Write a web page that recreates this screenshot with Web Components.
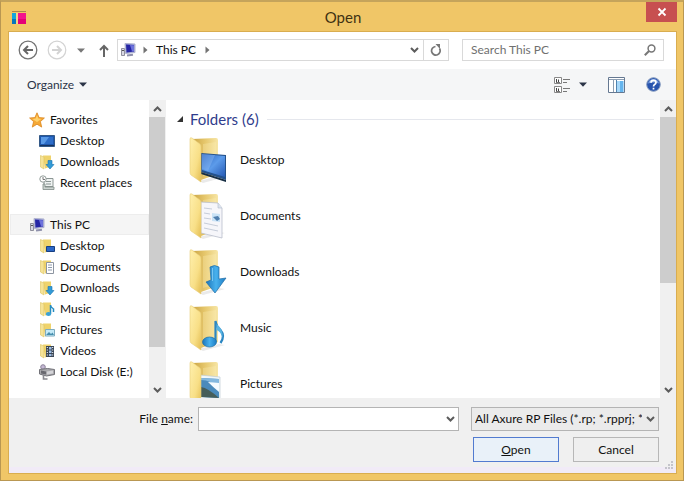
<!DOCTYPE html>
<html lang="en">
<head>
<meta charset="utf-8">
<title>Open</title>
<style>
html, body { height: 100%; margin: 0; }
body { box-sizing: border-box; padding: 0 1px 1px 0; background: #fff; font: 12px/16px Lato, "Open Sans", sans-serif; color: #111; overflow: hidden; }
</style>
</head>
<body>
<open-dialog></open-dialog>
<script>
const folderSmall = `<path d="M4 1.500h8v11l-6 2z" fill="#efd36c"/><path d="M1.500 1.500L5 3v12l-3.500-2z" fill="#f6e397" stroke="#dcc260" stroke-width=".6"/>`;
const folderBig = `<defs><linearGradient id="b" x1="0" x2="1"><stop offset="0" stop-color="#c9a343"/><stop offset=".5" stop-color="#e6c76c"/><stop offset="1" stop-color="#f7e6a6"/></linearGradient><linearGradient id="f" x1="0" x2="1" y2="1"><stop offset="0" stop-color="#fff0ad"/><stop offset=".6" stop-color="#f8df87"/><stop offset="1" stop-color="#e3bd52"/></linearGradient><linearGradient id="u" x1="0" x2="1" y2="1"><stop offset="0" stop-color="#2a62bd"/><stop offset=".5" stop-color="#5c9bea"/><stop offset="1" stop-color="#2559b4"/></linearGradient><linearGradient id="c" x1="0" x2="1"><stop offset="0" stop-color="#1b75ba"/><stop offset=".5" stop-color="#48b1ed"/><stop offset="1" stop-color="#1c7cc4"/></linearGradient></defs>
<path d="M10 45l20-5 6 1-22 6z" fill="#888" opacity=".18"/><path d="M3 3l24-1q2 0 2 2v34l-17 6z" fill="url(#b)"/><path d="M14 8l13-2v30l-13 4z" fill="#fff2b8" opacity=".3"/>`;
const flap = `<path d="M1 3q0-2 2-1l8 6q1 1 1 3v35L2 39q-1-1-1-3z" fill="url(#f)" stroke="#e8cd78" stroke-width=".6"/>`;
const pcIcon = `<path d="M1.500 6.500h3v7h-3z" fill="#d8d8e2" stroke="#777788" stroke-width=".8"/><path d="M2 8.500h2" stroke="#555"/><path d="M5 1.500l10 .5v8.500l-9.500 1z" fill="#9ba1d4" stroke="#b0b3cf"/><path d="M6 2.500l8 .5v6.500l-7.500 1z" fill="#2525a5"/><path d="M10 3l4 .2v6l-2 .2z" fill="#6d72dc"/><path d="M7 13.500l6-.8" stroke="#8f91ac" stroke-width="2"/>`;
const arrowSmall = `<path d="M9 6.500h4v4h2l-4 4.500-4-4.500h2z" fill="#329bd8" stroke="#1774ae" stroke-width=".6"/>`;
const ICONS = {
  app: [16,16,`<path d="M1 2.500h14" stroke="#a98751"/><path d="M1 4h4v11H1z" fill="#15a6dc"/><path d="M1 10h4v5H1z" fill="#0675bd"/><path d="M7 4h8v11H7z" fill="#f4148d"/><path d="M7 10h8v5H7z" fill="#e50078"/><path d="M6 4v11" stroke="#f8dfae"/>`],
  close: [10,10,`<path d="M1.500 1.500l7 7m0-7l-7 7" stroke="#fff" stroke-width="1.800"/>`],
  back: [20,20,`<circle cx="10" cy="10" r="8.800" fill="#fff" stroke="#737373" stroke-width="1.300"/><path d="M15 10H6m4-4l-4 4 4 4" fill="none" stroke="#666" stroke-width="2"/>`],
  forward: [20,20,`<circle cx="10" cy="10" r="8.800" fill="#fff" stroke="#d3d3d3" stroke-width="1.200"/><path d="M5 10h9m-4-4l4 4-4 4" fill="none" stroke="#d3d3d3" stroke-width="2"/>`],
  down: [8,5,`<path d="M0 .5h8L4 4.800z" fill="currentColor"/>`],
  right: [5,8,`<path d="M.5.500l4 3.500-4 3.500z" fill="#737373"/>`],
  up: [10,13,`<path d="M5 13V2M1 6l4-4 4 4" fill="none" stroke="#666" stroke-width="2"/>`],
  chevron: [9,6,`<path d="M1 1l3.500 3.500L8 1" fill="none" stroke="#5c5c5c" stroke-width="2"/>`],
  chevronUp: [9,6,`<path d="M1 5l3.500-3.500L8 5" fill="none" stroke="#5c5c5c" stroke-width="2"/>`],
  refresh: [12,12,`<path d="M9.500 4.500A4.300 4.300 0 1 1 5.500 2.500" fill="none" stroke="#777" stroke-width="1.700"/><path d="M5.500 0h4.500v5z" fill="#777"/>`],
  search: [12,12,`<circle cx="7.500" cy="4.500" r="3.400" fill="none" stroke="#777" stroke-width="1.500"/><path d="M5 7L.8 11.200" stroke="#777" stroke-width="2"/>`],
  views: [17,16,`<g fill="#fff" stroke="#888"><path d="M.5.500h7v6h-7zM.5 9.500h7v6h-7z"/></g><path d="M2.500 2v3m2-2.500v2.500M2.500 11v3m2-2.500v2.500" stroke="#444"/><path d="M2 5.500h4M2 14.500h4M9 2.500h7M9 5.500h4M9 11.500h7M9 14.500h4" stroke="#777"/>`],
  pane: [17,16,`<path d="M.5.500h16v15H.5z" fill="#fff" stroke="#657891"/><path d="M1 2.500h15M5.500 3v12" stroke="#8d9eb2"/><path d="M9 4h6.500v11H9z" fill="#65b5ee"/><path d="M9 4h3v11H9z" fill="#a6d8fa"/><path d="M8.500 3v12" stroke="#5284af"/>`],
  help: [15,15,`<circle cx="7.500" cy="7.500" r="6.800" fill="#2854ae" stroke="#8298bd"/><path d="M2 6.500a5.600 5.600 0 0 1 11 0q-5-2-11 0z" fill="#7c9fdd"/><path d="M5 5.700q0-2.400 2.500-2.400T10 5.500q0 1.200-1.400 2Q7.500 8.200 7.500 9.500m0 1.200v1.700" fill="none" stroke="#fff" stroke-width="1.700"/>`],
  star: [16,16,`<path d="M8 .8l2.100 4.800 5.300.4-4 3.600 1.300 5.500L8 12.200l-4.700 2.900 1.300-5.500-4-3.600 5.300-.4z" fill="#f5a936" stroke="#dc861f" stroke-width=".8"/><path d="M8 3l1.300 3.500 3 .4-4.300 3-4.600-3 3.300-.4z" fill="#ffd16c"/>`],
  screen: [16,16,`<path d="M.5 2.500h15v11H.5z" fill="#1e57ad" stroke="#345987"/><path d="M2 4h12v7H2z" fill="#2e6ec9"/><path d="M2 4h8l-5 7H2z" fill="#5a9ae6"/><path d="M1 12.500h14" stroke="#17345f"/>`],
  pc: [16,16,pcIcon],
  recent: [16,16,`<path d="M5 3.500h9v8H5z" fill="#eff3f2" stroke="#8c9694"/><path d="M7 6.500h5M7 9h5" stroke="#8b9694"/><circle cx="4" cy="4" r="3.200" fill="#fff" stroke="#929c99"/><path d="M4 2v2.500h2" fill="none" stroke="#777"/><path d="M4 9v5.500h11v-2.500H6V9z" fill="#ccd4d1" stroke="#7f8a87" stroke-width=".8"/>`],
  sDesktop: [16,16,folderSmall+`<path d="M7.500 8.500h8v5h-8z" fill="#2b66c5" stroke="#163f82"/>`],
  sDocuments: [16,16,folderSmall+`<path d="M7.500 3.500h7v11h-7z" fill="#fff" stroke="#8d95a1"/><path d="M9 6h4M9 8.500h4M9 11h4" stroke="#8f9bae"/>`],
  sDownloads: [16,16,folderSmall+arrowSmall],
  sMusic: [16,16,folderSmall+`<path d="M11.500 13V4q0 2 3 4v3" fill="none" stroke="#268cc0" stroke-width="1.500"/><ellipse cx="9.500" cy="13" rx="2.700" ry="2" fill="#3aa1d5"/>`],
  sPictures: [16,16,folderSmall+`<path d="M6.500 7.500h9v6.500h-9z" fill="#c4e9f7" stroke="#7eacc0"/><path d="M7 13l3-3 2 2 1.500-1.500L15 13z" fill="#478fae"/>`],
  sVideos: [16,16,folderSmall+`<path d="M7 3h8v11H7z" fill="#3a4656"/><path d="M10 4h2.500v2.500H10zM10 7.500h2.500V10H10zM10 11h2.500v2H10z" fill="#9cbde5"/><path d="M8.300 4v10m5.400-10v10" stroke="#fff" stroke-dasharray="1 1.500"/>`],
  disk: [16,16,`<circle cx="4" cy="3" r="2.300" fill="#c4b8d4" stroke="#8b8298"/><path d="M.5 5.500l8-1 7 1v5l-8 1.500-7-2z" fill="#a9a9ad" stroke="#727278"/><path d="M2 6.500l5 1v3l-5-1z" fill="#696970"/><path d="M8 7.500l6-1v3l-6 1z" fill="#d4d4d8"/><path d="M4.500 11v4h4" fill="none" stroke="#898990" stroke-width="1.600"/>`],
  bDesktop: [40,48,folderBig+`<path d="M12 17l25 2v25l-25-8z" fill="#24518a"/><path d="M13 18l23 2v21l-23-7z" fill="url(#u)"/><path d="M13 18l13 1-7 16-6-2z" fill="#a8d2ff" opacity=".3"/><path d="M12 36l25 8v2l-25-8z" fill="#172e44"/>`+flap],
  bDocuments: [40,48,folderBig+`<path d="M12 10l17 1 4 5v30l-21-5z" fill="#f6f6fa" stroke="#b9becb" stroke-width=".8"/><path d="M29 11v5h4" fill="#dce4ef" stroke="#b2bdcb" stroke-width=".6"/><path d="M15 16l8 1M15 21l6 1M15 26l7 1M15 31l14 3M15 36l14 3" stroke="#c0c7d5" stroke-width=".9"/><path d="M23 21l8 1v8l-8-1z" fill="#c9e2f6"/><path d="M24 25l5-1 2 3-3 2z" fill="#4f7eae"/>`+flap],
  bDownloads: [40,48,folderBig+flap+`<path d="M21 19q4.500-3 9 0v12l7-1-11 15-9-11 5-2z" fill="url(#c)" stroke="#206ba5" stroke-width=".7"/><path d="M23.500 20v13" stroke="#87d1f8" opacity=".8"/>`],
  bMusic: [40,48,folderBig+flap+`<path d="M26.500 38V17q1 6 5 9 5 6 0 13" fill="none" stroke="#2b86c2" stroke-width="2.200"/><path d="M27.500 20q7 5 6 14-2-7-6-8z" fill="#58b3e2"/><ellipse cx="20.500" cy="38" rx="7" ry="5" fill="url(#c)" stroke="#216fa0" stroke-width=".7"/>`],
  bPictures: [40,48,folderBig+`<path d="M11 15l20 2v24l-20-2z" fill="#eff7fb" stroke="#becbd2" stroke-width=".7"/><path d="M12 18l18 1v19l-18-1z" fill="#4a8abb"/><path d="M12 20q10 0 18 9V19l-18-1z" fill="#83b8df"/><path d="M19 22l11 1v9q-6-5-11-10z" fill="#f4fbff"/><path d="M12 27q7 1 18 11l-18-1z" fill="#465e59"/>`+flap],
  expanded: [6,6,`<path d="M6 0v6H0z" fill="#333"/>`],
  grip: [9,9,`<path d="M7 1h2M4 4h2m1 0h2M1 7h2m1 0h2m1 0h2" stroke="#c4c4cb" stroke-width="2"/>`]
};
function define(name, css, html) {
  customElements.define(name, class extends HTMLElement {
    constructor() {
      super();
      const t = document.createElement('template');
      t.innerHTML = `<style>*{box-sizing:border-box}button,input,select{font:inherit;color:inherit;margin:0}button{padding:0;border:0;background:none}${css}</style>${typeof html === 'function' ? html(this) : html}`;
      this.attachShadow({mode:'open'}).append(t.content.cloneNode(true));
    }
  });
}
define('ui-icon', ':host{display:inline-flex;flex:none}svg{display:block}', el => {
  const [w,h,body] = ICONS[el.getAttribute('name')];
  return `<svg width="${w}" height="${h}" viewBox="0 0 ${w} ${h}" aria-hidden="true">${body}</svg>`;
});
define('title-bar', `:host{display:grid;grid-template-columns:1fr auto 1fr;height:30px;flex:none}
ui-icon{margin:7px 0 0 2px}h1{margin:4px 0 0;font-size:15px;line-height:22px;font-weight:400;color:#3f3213}
button{justify-self:end;width:31px;height:20px;background:#c75050;display:grid;place-items:center}button ui-icon{margin:0}`,
`<ui-icon name="app"></ui-icon><h1><slot></slot></h1><button aria-label="Close"><ui-icon name="close"></ui-icon></button>`);
define('address-bar', `:host{display:flex;align-items:center;height:37px;flex:none;padding:0 12px 1px 9px;background:#fff}
button{display:grid;place-items:center;flex:none}.fwd{margin-left:9px}.hist{width:28px;color:#777}.up{width:18px;margin-right:4px}
.path{flex:1;display:flex;height:22px;border:1px solid #d9d9d9;align-items:center;padding-left:2px}
.path>ui-icon{margin:0 7px 0 0}.path>ui-icon+ui-icon{margin-right:8px}.path a{color:#111;text-decoration:none;margin-right:9px}
.drop{margin-left:auto;width:18px}.ref{width:25px;height:20px;border-left:1px solid #d9d9d9}
.search{width:202px;height:22px;border:1px solid #d9d9d9;margin-left:13px;display:flex;align-items:center;padding:0 7px 0 8px}
input{flex:1;min-width:0;border:0;padding:0;background:none;outline:0}input::placeholder{color:#707070;opacity:1}`,
`<button aria-label="Back"><ui-icon name="back"></ui-icon></button><button class="fwd" aria-label="Forward"><ui-icon name="forward"></ui-icon></button><button class="hist" aria-label="Recent locations"><ui-icon name="down"></ui-icon></button><button class="up" aria-label="Up"><ui-icon name="up"></ui-icon></button>
<div class="path"><ui-icon name="pc"></ui-icon><ui-icon name="right"></ui-icon><a href="#"><slot></slot></a><ui-icon name="right"></ui-icon><button class="drop" aria-label="Previous locations"><ui-icon name="chevron"></ui-icon></button><button class="ref" aria-label="Refresh"><ui-icon name="refresh"></ui-icon></button></div>
<div class="search"><input type="text" placeholder="Search This PC" aria-label="Search This PC"><ui-icon name="search"></ui-icon></div>`);
define('command-bar', `:host{display:flex;align-items:center;height:31px;flex:none;padding:0 15px 0 18px;background:#f5f6f7;color:#2b3447}
button{display:flex;align-items:center}.org{gap:5px;margin-right:auto}.views{gap:8px}.pane{margin:0 21px}`,
`<button class="org">Organize<ui-icon name="down"></ui-icon></button><button class="views" aria-label="Change view"><ui-icon name="views"></ui-icon><ui-icon name="down"></ui-icon></button><button class="pane" aria-label="Preview pane"><ui-icon name="pane"></ui-icon></button><button aria-label="Help"><ui-icon name="help"></ui-icon></button>`);
define('scroll-rail', `:host{display:flex;flex-direction:column;width:16px;flex:none;background:#f0f0f0}
button{height:17px;display:grid;place-items:center;flex:none}.track{flex:1}.thumb{height:var(--thumb);background:#cdcdcd}`,
`<button aria-label="Scroll up"><ui-icon name="chevronUp"></ui-icon></button><div class="track"><div class="thumb"></div></div><button aria-label="Scroll down"><ui-icon name="chevron"></ui-icon></button>`);
define('tree-item', `:host{display:block}a{display:flex;align-items:center;gap:5px;height:21px;padding-left:19px;color:inherit;text-decoration:none;white-space:nowrap}
:host([child]) a{padding-left:29px}:host([current]) a{background:#f5f5f5;border:1px solid #ededed;padding-left:18px}:host([group]){margin-top:21px}`,
el => `<a href="#"><ui-icon name="${el.getAttribute('icon')}"></ui-icon><slot></slot></a>`);
define('nav-tree', `:host{display:flex;width:157px;flex:none;border-right:1px solid #f0f0f0}nav{flex:1;min-width:0;padding:9px 0 0 1px;overflow:hidden}scroll-rail{--thumb:87%}`,
`<nav aria-label="Locations"><slot></slot></nav><scroll-rail></scroll-rail>`);
define('folder-item', `:host{display:block}a{display:flex;align-items:center;gap:11px;height:56px;color:inherit;text-decoration:none}`,
el => `<a href="#"><ui-icon name="${el.getAttribute('icon')}"></ui-icon><slot></slot></a>`);
define('folder-list', `:host{display:flex;flex:1;min-width:0}section{flex:1;min-width:0;overflow:hidden;padding:6px 0 0 11px}
header{display:flex;align-items:center;gap:7px;height:26px;padding-right:6px}h2{font-size:15px;line-height:20px;font-weight:400;color:#2f3c8c;margin:0}
hr{flex:1;border:0;border-top:1px solid #e5e7ed;margin:0 0 0 1px}.items{padding-left:12px}scroll-rail{--thumb:63%}`,
`<section><header><ui-icon name="expanded"></ui-icon><h2>Folders (6)</h2><hr></header><div class="items"><slot></slot></div></section><scroll-rail></scroll-rail>`);
define('file-footer', `:host{display:flex;flex-direction:column;gap:6px;flex:none;padding:9px 17px 5px 0;background:#f0f0f0;border-bottom:6px solid #f1ebf7}
.row{display:flex;align-items:center}.row+.row{justify-content:flex-end;gap:14px}label{width:184px;text-align:right;margin-right:5px}
.combo{flex:1;display:flex;height:24px;border:1px solid #b4b4b4;background:#fff}input{flex:1;min-width:0;border:0;padding:0 4px;background:none;outline:0}.combo button{width:16px;display:grid;place-items:center}
.type{width:188px;height:24px;margin-left:12px;display:grid;grid-template-columns:1fr 16px;align-items:center;border:1px solid #b4b4b4;background:#ebebeb}
select{appearance:none;grid-area:1/1/2/3;width:100%;height:22px;border:0;border-right:16px solid transparent;padding:0 0 0 3px;background:none;outline:0}.type ui-icon{grid-area:1/2;justify-self:center;pointer-events:none}
.act{width:86px;height:25px;border:1px solid #b7b7b7;background:#efefef}.main{border-color:#527bd0;background:#e9f1f9}`,
`<div class="row"><label for="n">File <u>n</u>ame:</label><div class="combo"><input id="n" type="text"><button aria-label="Show file names"><ui-icon name="chevron"></ui-icon></button></div>
<div class="type"><select aria-label="File type"><option>All Axure RP Files (*.rp; *.rpprj; *</option></select><ui-icon name="chevron"></ui-icon></div></div>
<div class="row"><button class="act main"><u>O</u>pen</button><button class="act">Cancel</button></div>`);
define('open-dialog', `:host{display:flex;flex-direction:column;height:100%;border:1px solid #b99752;border-top:2px solid #c5a45b;background:#f0c667;padding:0 7px 7px 8px;position:relative}
:host{box-sizing:border-box}title-bar{margin-right:-1px}.body{flex:1;min-height:0;display:flex;flex-direction:column;background:#fff;outline:1px solid #d9ad50}
.main{flex:1;min-height:0;display:flex;background:#fff}.grip{position:absolute;right:10px;bottom:10px}`,
`<title-bar>Open</title-bar><div class="body"><address-bar>This PC</address-bar><command-bar></command-bar><div class="main">
<nav-tree><tree-item icon="star">Favorites</tree-item><tree-item child icon="screen">Desktop</tree-item><tree-item child icon="sDownloads">Downloads</tree-item><tree-item child icon="recent">Recent places</tree-item>
<tree-item group current icon="pc">This PC</tree-item><tree-item child icon="sDesktop">Desktop</tree-item><tree-item child icon="sDocuments">Documents</tree-item><tree-item child icon="sDownloads">Downloads</tree-item><tree-item child icon="sMusic">Music</tree-item><tree-item child icon="sPictures">Pictures</tree-item><tree-item child icon="sVideos">Videos</tree-item><tree-item child icon="disk">Local Disk (E:)</tree-item></nav-tree>
<folder-list><folder-item icon="bDesktop">Desktop</folder-item><folder-item icon="bDocuments">Documents</folder-item><folder-item icon="bDownloads">Downloads</folder-item><folder-item icon="bMusic">Music</folder-item><folder-item icon="bPictures">Pictures</folder-item></folder-list>
</div><file-footer></file-footer></div><ui-icon class="grip" name="grip"></ui-icon>`);
</script>
</body>
</html>
